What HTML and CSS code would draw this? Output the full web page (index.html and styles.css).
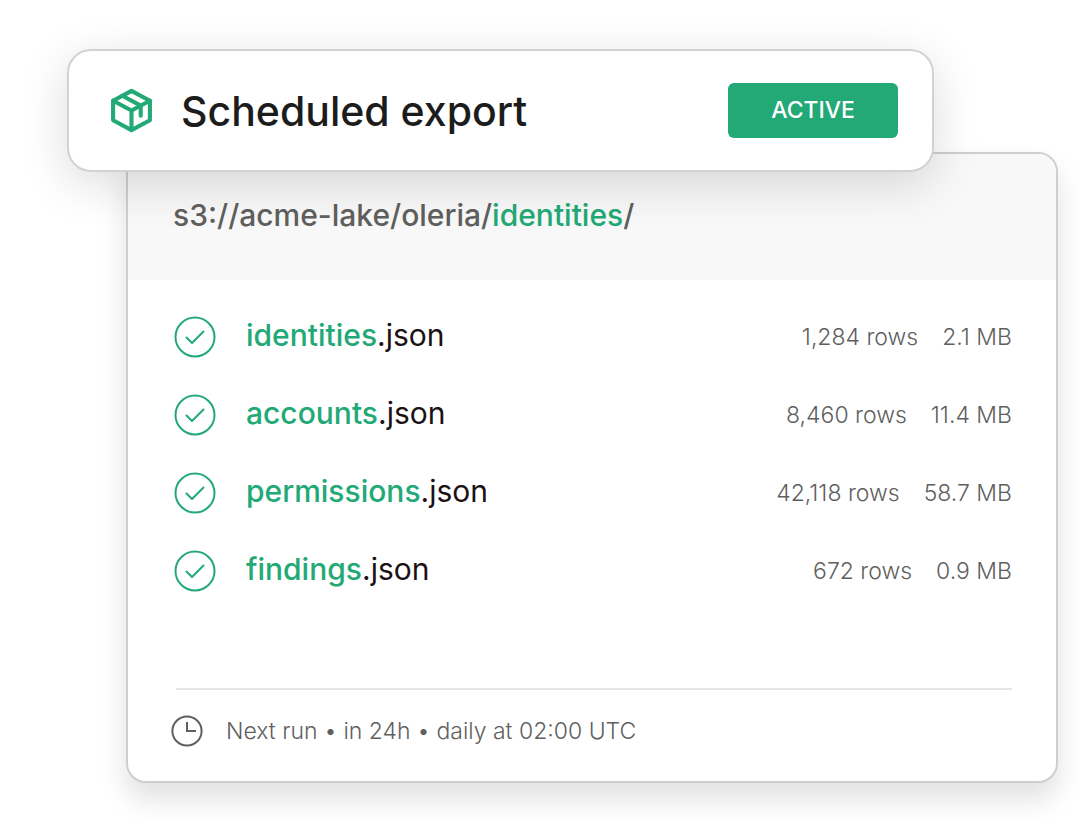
FILE: index.html
```html
<!DOCTYPE html>
<html lang="en">
<head>
    <meta charset="UTF-8">
    <meta name="viewport" content="width=device-width, initial-scale=1.0">
    <title>Scheduled export</title>
    <link rel="stylesheet" href="styles.css">
</head>
<body>
    <svg width="0" height="0" class="sprite" aria-hidden="true">
        <symbol id="check" viewBox="0 0 42 42">
            <circle cx="21" cy="21" r="19.5" />
            <path d="M12.5 21.5l5.5 5.5 11.5-11.5" />
        </symbol>
    </svg>

    <main class="export">
        <header class="export-header">
            <svg class="box-icon" viewBox="0 0 42 44" aria-hidden="true">
                <path d="M21 2.8l18 9.6v19.2L21 41.2 3 31.6V12.4z" />
                <path d="M3 12.4L21 22l18-9.6M21 22v19" />
                <path d="M12 7.6l18 9.6v10" />
            </svg>
            <h1>Scheduled export</h1>
            <span class="status">ACTIVE</span>
        </header>

        <section class="panel">
            <p class="path">s3://acme-lake/oleria/<span class="green">identities</span>/</p>

            <ul class="files">
                <li>
                    <svg class="check-icon" aria-hidden="true"><use href="#check" /></svg>
                    <span class="name"><span class="green">identities</span>.json</span>
                    <span class="rows">1,284 rows</span>
                    <span class="size">2.1 MB</span>
                </li>
                <li>
                    <svg class="check-icon" aria-hidden="true"><use href="#check" /></svg>
                    <span class="name"><span class="green">accounts</span>.json</span>
                    <span class="rows">8,460 rows</span>
                    <span class="size">11.4 MB</span>
                </li>
                <li>
                    <svg class="check-icon" aria-hidden="true"><use href="#check" /></svg>
                    <span class="name"><span class="green">permissions</span>.json</span>
                    <span class="rows">42,118 rows</span>
                    <span class="size">58.7 MB</span>
                </li>
                <li>
                    <svg class="check-icon" aria-hidden="true"><use href="#check" /></svg>
                    <span class="name"><span class="green">findings</span>.json</span>
                    <span class="rows">672 rows</span>
                    <span class="size">0.9 MB</span>
                </li>
            </ul>

            <footer class="next-run">
                <svg class="clock-icon" viewBox="0 0 32 32" aria-hidden="true">
                    <circle cx="16" cy="16" r="14.6" />
                    <path d="M16 7v9h9" />
                </svg>
                <span>Next run • in 24h • daily at 02:00 UTC</span>
            </footer>
        </section>
    </main>
</body>
</html>
```

FILE: styles.css
```css
* {
    box-sizing: border-box;
}
body {
    margin: 0;
    background-color: #fff;
    font-family: Inter, "Open Sans", sans-serif;
    color: #1c1c1c;
}
h1, p, ul {
    margin: 0;
    padding: 0;
}
svg {
    flex: none;
    fill: none;
}
.sprite {
    position: absolute;
}
.green {
    color: #22a976;
    font-weight: 500;
}
.export {
    padding: 49px 22px 42px 67px;
}

/* title card, overlaps the top of the panel */
.export-header {
    position: relative;
    z-index: 1;
    display: flex;
    align-items: center;
    gap: 28px;
    height: 123px;
    margin-right: 124px;
    padding: 0 34px 0 41px;
    background-color: #fff;
    border: 2px solid #d2d2d2;
    border-radius: 24px;
    box-shadow: 0 12px 48px rgba(0, 0, 0, 0.14);
}
.export-header h1 {
    flex: 1;
    font-size: 41px;
    font-weight: 500;
}
.box-icon {
    width: 43px;
    height: 45px;
    stroke: #22a976;
    stroke-width: 4;
    stroke-linejoin: round;
    stroke-linecap: round;
}
.status {
    padding: 12px 43px;
    border-radius: 6px;
    background-color: #22a976;
    color: #fff;
    font-size: 23px;
    font-weight: 500;
    line-height: 31px;
}

.panel {
    margin: -20px 0 0 59px;
    overflow: hidden;
    background-color: #fff;
    border: 2px solid #cecece;
    border-radius: 20px;
    box-shadow: 0 16px 28px rgba(0, 0, 0, 0.12);
}
.path {
    padding: 40px 45px 44px;
    background-color: #f8f8f8;
    color: #5f5f5d;
    font-size: 30px;
    font-weight: 500;
    line-height: 42px;
}
.files {
    padding: 18px 44px 78px 46px;
    list-style: none;
}
.files li {
    display: flex;
    align-items: center;
    height: 78px;
    color: #5f5f5f;
    font-size: 23px;
    font-weight: 300;
}
.check-icon {
    width: 42px;
    height: 42px;
    margin-right: 30px;
    stroke: #22a976;
    stroke-width: 2;
    stroke-linejoin: round;
    stroke-linecap: round;
}
.files .name {
    flex: 1;
    padding-bottom: 4px;
    color: #1c1214;
    font-size: 30px;
    font-weight: 400;
}
.size {
    margin-left: 24px;
}
.next-run {
    display: flex;
    align-items: center;
    gap: 23px;
    margin: 0 44px 0 48px;
    padding: 22px 0 31px;
    border-top: 2px solid #e6e6e6;
    color: #5f5f5f;
    font-size: 23px;
    font-weight: 300;
    line-height: 38px;
}
.clock-icon {
    width: 32px;
    height: 32px;
    margin-left: -5px;
    stroke: #5f5f5d;
    stroke-width: 2;
}
```
